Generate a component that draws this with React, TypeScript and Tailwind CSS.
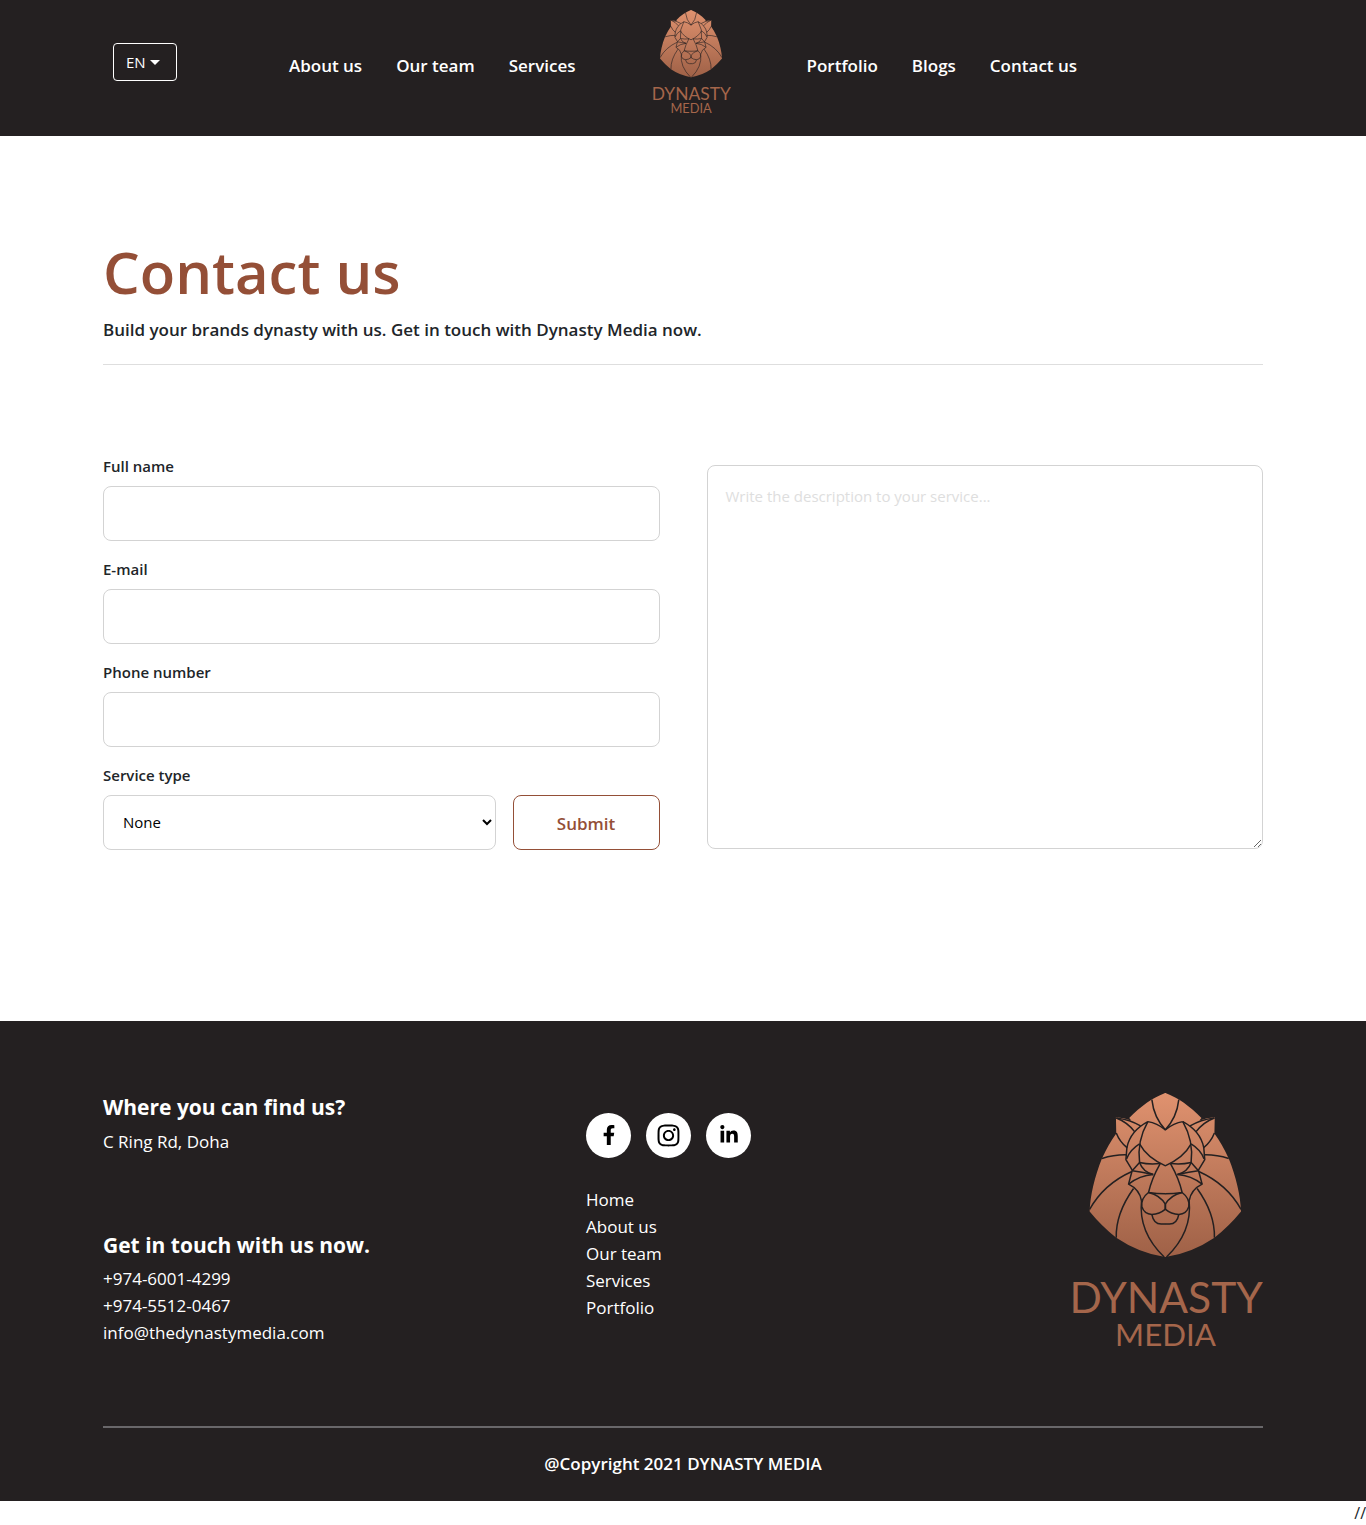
import { FaFacebookF, FaInstagram, FaLinkedinIn } from "react-icons/fa";

const manePath =
  "M319 38 L317 38 C280 52 243 78 209 113 L215 121 Q192 112 169 111 L170 160 Q148 190 127 235 C105 290 92 345 90 394 Q125 437 170 473 Q240 520 317 531 L319 531 Z";

const facePaths = [
  "M277 58 Q283 112 318 149",
  "M318 149 Q292 128 265 124",
  "M170 113 Q212 118 243 137",
  "M170 113 Q204 126 225 154",
  "M170 158 Q180 184 203 203",
  "M265 124 Q212 152 202 202 L199 238 L218 270 L207 312 Q240 328 246 362",
  "M265 124 Q232 182 240 246",
  "M240 191 Q262 232 318 257",
  "M240 191 Q212 208 201 236",
  "M218 272 L240 247 Q270 254 302 250",
  "M240 247 Q250 275 281 283",
  "M281 283 Q240 286 207 312",
  "M218 272 Q245 276 281 283",
  "M302 250 Q276 296 267 337 Q292 341 318 341",
  "M267 337 Q302 345 318 373 L318 389",
  "M267 337 Q243 355 247 380 Q254 402 277 403 Q300 402 318 387",
  "M277 403 Q282 432 305 432 L318 432",
  "M246 362 Q236 455 314 531",
  "M127 235 Q165 223 202 224",
  "M90 388 Q132 312 217 274",
  "M222 325 Q168 400 170 473",
];

const mirror = "translate(635 0) scale(-1 1)";

function FaceLines() {
  return (
    <>
      {facePaths.map((d) => (
        <path key={d} d={d} />
      ))}
    </>
  );
}

function Logo({ id, className }: { id: string; className: string }) {
  return (
    <svg viewBox="31 38 580 782" className={className} role="img" aria-label="Dynasty Media">
      <defs>
        <linearGradient id={id} gradientUnits="userSpaceOnUse" x1="0" y1="38" x2="0" y2="531">
          <stop offset="0" stopColor="#e0926f" />
          <stop offset="1" stopColor="#9f6147" />
        </linearGradient>
      </defs>
      <g fill={`url(#${id})`}>
        <path d={manePath} />
        <path d={manePath} transform={mirror} />
      </g>
      <g fill="none" stroke="#242021" strokeWidth="4.5" strokeLinejoin="round">
        <FaceLines />
        <g transform={mirror}>
          <FaceLines />
        </g>
      </g>
      <g fill="#a5664b" fontFamily="Lato, sans-serif" textAnchor="middle">
        <text x="320" y="700" fontSize="128">DYNASTY</text>
        <text x="318" y="797" fontSize="94">MEDIA</text>
      </g>
    </svg>
  );
}

function NavLinks({ items }: { items: string[] }) {
  return (
    <ul className="flex gap-[34px]">
      {items.map((item) => (
        <li key={item}>
          <a href="#" className="whitespace-nowrap text-[17px] leading-[27px] font-semibold text-white">
            {item}
          </a>
        </li>
      ))}
    </ul>
  );
}

function Field({ id, label, type }: { id: string; label: string; type: string }) {
  return (
    <div className="mb-4">
      <label htmlFor={id} className="mb-2 block text-[15px] leading-6 font-semibold">
        {label}
      </label>
      <input
        id={id}
        type={type}
        className="block h-[55px] w-full rounded-lg border border-[#d3d3d3] px-[18px] text-base outline-none"
      />
    </div>
  );
}

const socials = [
  { name: "Facebook", Icon: FaFacebookF, size: 20 },
  { name: "Instagram", Icon: FaInstagram, size: 25 },
  { name: "LinkedIn", Icon: FaLinkedinIn, size: 20 },
];

export default function App() {
  return (
    <div className="bg-white font-['Open_Sans',sans-serif] text-[#212529]">
      <header className="bg-[#242021]">
        <div className="mx-auto grid max-w-[1160px] grid-cols-[1fr_auto_1fr] items-start pb-[19px]">
          <button
            type="button"
            className="mt-[43px] ml-[10px] flex h-[38px] w-16 items-center gap-1 rounded border border-white px-3 text-[15px] text-white"
          >
            EN
            <span className="border-x-[5px] border-t-[5px] border-x-transparent border-t-white" />
          </button>
          <nav className="flex items-start gap-[76px]" aria-label="Main">
            <div className="mt-[52px]">
              <NavLinks items={["About us", "Our team", "Services"]} />
            </div>
            <a href="#" className="mt-[10px]">
              <Logo id="header-copper" className="block w-[79px]" />
            </a>
            <div className="mt-[52px]">
              <NavLinks items={["Portfolio", "Blogs", "Contact us"]} />
            </div>
          </nav>
        </div>
      </header>

      <main className="mx-auto max-w-[1160px] pt-[100px] pb-[171px]">
        <h1 className="text-[58px] leading-[72px] font-semibold text-[#944f37]">Contact us</h1>
        <p className="mt-2 text-[17px] leading-[27px] font-semibold">
          Build your brands dynasty with us. Get in touch with Dynasty Media now.
        </p>
        <hr className="mt-[21px] border-[#dedede]" />
        <form className="mt-[89px] grid grid-cols-2 gap-[47px]">
          <div>
            <Field id="name" label="Full name" type="text" />
            <Field id="email" label="E-mail" type="email" />
            <Field id="phone" label="Phone number" type="tel" />
            <label htmlFor="service" className="mb-2 block text-[15px] leading-6 font-semibold">
              Service type
            </label>
            <div className="flex gap-[17px]">
              <select
                id="service"
                className="h-[55px] flex-1 rounded-lg border border-[#d3d3d3] bg-white px-[15px] text-[15px] text-black"
              >
                <option>None</option>
              </select>
              <button
                type="button"
                className="h-[55px] w-[147px] rounded-lg border border-[#944f37] pt-1 text-[17px] font-semibold text-[#944f37]"
              >
                Submit
              </button>
            </div>
          </div>
          <textarea
            aria-label="Description"
            placeholder="Write the description to your service..."
            className="mt-[11px] block h-[384px] w-full rounded-lg border border-[#d3d3d3] px-[18px] py-[18px] text-[15px] leading-6 outline-none placeholder:text-[#dedede]"
          />
        </form>
      </main>

      <footer className="bg-[#242021] text-white">
        <div className="mx-auto max-w-[1160px] pt-[72px] pb-6">
          <div className="grid grid-cols-[483px_1fr_auto]">
            <div className="text-[17px] leading-[27px]">
              <h2 className="text-[21px] leading-7 font-bold">Where you can find us?</h2>
              <p className="mt-[7px]">C Ring Rd, Doha</p>
              <h2 className="mt-[76px] text-[21px] leading-7 font-bold">Get in touch with us now.</h2>
              <ul className="mt-[6px]">
                <li><a href="#">+974-6001-4299</a></li>
                <li><a href="#">+974-5512-0467</a></li>
                <li><a href="#">info@thedynastymedia.com</a></li>
              </ul>
            </div>
            <div className="pt-5">
              <div className="flex gap-[15px]">
                {socials.map(({ name, Icon, size }) => (
                  <a
                    key={name}
                    href="#"
                    aria-label={name}
                    className="flex size-[45px] items-center justify-center rounded-full bg-white text-black"
                  >
                    <Icon size={size} />
                  </a>
                ))}
              </div>
              <ul className="mt-[28px] text-[17px] leading-[27px]">
                {["Home", "About us", "Our team", "Services", "Portfolio"].map((item) => (
                  <li key={item}>
                    <a href="#">{item}</a>
                  </li>
                ))}
              </ul>
            </div>
            <Logo id="footer-copper" className="block w-[193px]" />
          </div>
          <hr className="mt-[73px] border-t-2 border-[#69676a]" />
          <p className="mt-[22px] text-center text-[17px] leading-[27px] font-semibold">
            @Copyright 2021 DYNASTY MEDIA
          </p>
        </div>
      </footer>
      <p className="text-right text-base leading-6">//</p>
    </div>
  );
}
